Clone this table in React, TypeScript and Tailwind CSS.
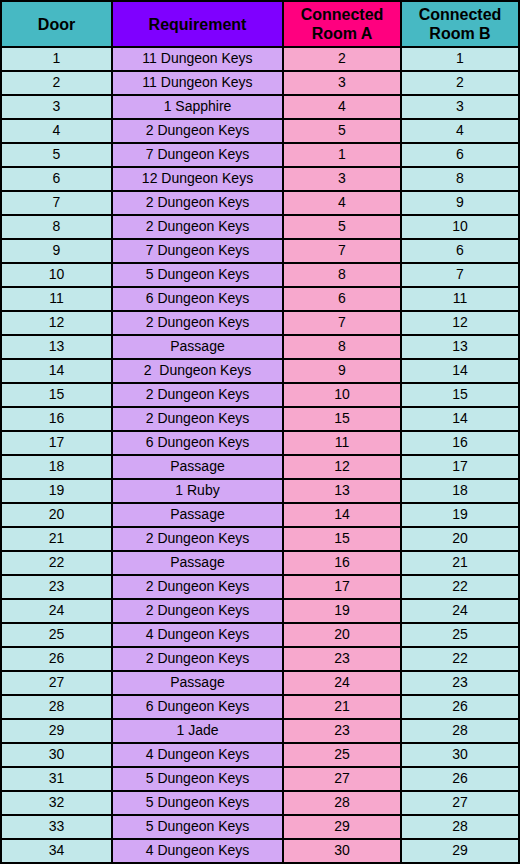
const rows: [string, string, string][] = [
  ["11 Dungeon Keys", "2", "1"],
  ["11 Dungeon Keys", "3", "2"],
  ["1 Sapphire", "4", "3"],
  ["2 Dungeon Keys", "5", "4"],
  ["7 Dungeon Keys", "1", "6"],
  ["12 Dungeon Keys", "3", "8"],
  ["2 Dungeon Keys", "4", "9"],
  ["2 Dungeon Keys", "5", "10"],
  ["7 Dungeon Keys", "7", "6"],
  ["5 Dungeon Keys", "8", "7"],
  ["6 Dungeon Keys", "6", "11"],
  ["2 Dungeon Keys", "7", "12"],
  ["Passage", "8", "13"],
  ["2  Dungeon Keys", "9", "14"],
  ["2 Dungeon Keys", "10", "15"],
  ["2 Dungeon Keys", "15", "14"],
  ["6 Dungeon Keys", "11", "16"],
  ["Passage", "12", "17"],
  ["1 Ruby", "13", "18"],
  ["Passage", "14", "19"],
  ["2 Dungeon Keys", "15", "20"],
  ["Passage", "16", "21"],
  ["2 Dungeon Keys", "17", "22"],
  ["2 Dungeon Keys", "19", "24"],
  ["4 Dungeon Keys", "20", "25"],
  ["2 Dungeon Keys", "23", "22"],
  ["Passage", "24", "23"],
  ["6 Dungeon Keys", "21", "26"],
  ["1 Jade", "23", "28"],
  ["4 Dungeon Keys", "25", "30"],
  ["5 Dungeon Keys", "27", "26"],
  ["5 Dungeon Keys", "28", "27"],
  ["5 Dungeon Keys", "29", "28"],
  ["4 Dungeon Keys", "30", "29"],
];

const head = "flex h-[44px] items-center justify-center text-center text-[16px] font-bold leading-[19px] text-black";
const cell = "flex h-[22px] items-center justify-center whitespace-pre pb-[2px] text-[14px] leading-none text-black";

export default function App() {
  return (
    <div
      className="grid w-[520px] grid-cols-[109px_169px_116px_116px] gap-[2px] bg-black p-[2px]"
      style={{ fontFamily: '"Liberation Sans", Arial, sans-serif' }}
    >
      <div className={`${head} bg-[#47b9c3]`}>Door</div>
      <div className={`${head} bg-[#7f00ff]`}>Requirement</div>
      <div className={`${head} bg-[#ff007f]`}>
        Connected
        <br />
        Room A
      </div>
      <div className={`${head} bg-[#47b9c3]`}>
        Connected
        <br />
        Room B
      </div>

      {rows.map(([req, a, b], i) => (
        <div key={i} className="contents">
          <div className={`${cell} bg-[#c2e8ea]`}>{i + 1}</div>
          <div className={`${cell} bg-[#d3a8f5]`}>{req}</div>
          <div className={`${cell} bg-[#f7a8cd]`}>{a}</div>
          <div className={`${cell} bg-[#c2e8ea]`}>{b}</div>
        </div>
      ))}
    </div>
  );
}
